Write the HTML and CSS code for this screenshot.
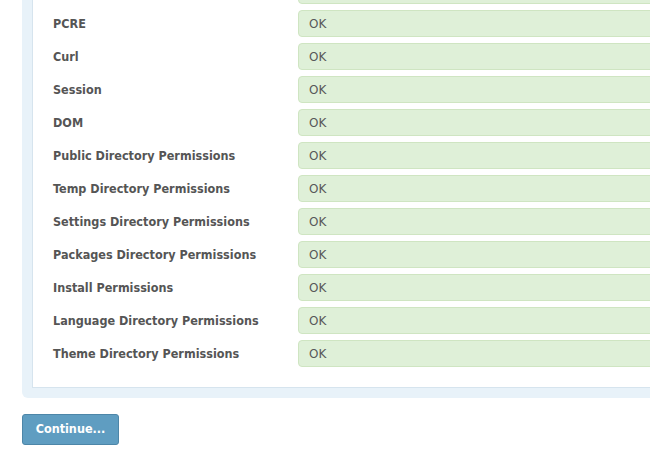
FILE: index.html
```html
<!DOCTYPE html>
<html>
<head>
<meta charset="utf-8">
<link rel="stylesheet" href="styles.css">
</head>
<body>
<div class="page">
  <div class="panel">
    <div class="inner">
      <div class="rows">
        <div class="label">Imagick</div><div class="status">OK</div>
        <div class="label">PCRE</div><div class="status">OK</div>
        <div class="label">Curl</div><div class="status">OK</div>
        <div class="label">Session</div><div class="status">OK</div>
        <div class="label">DOM</div><div class="status">OK</div>
        <div class="label">Public Directory Permissions</div><div class="status">OK</div>
        <div class="label">Temp Directory Permissions</div><div class="status">OK</div>
        <div class="label">Settings Directory Permissions</div><div class="status">OK</div>
        <div class="label">Packages Directory Permissions</div><div class="status">OK</div>
        <div class="label">Install Permissions</div><div class="status">OK</div>
        <div class="label">Language Directory Permissions</div><div class="status">OK</div>
        <div class="label">Theme Directory Permissions</div><div class="status">OK</div>
      </div>
    </div>
  </div>
  <button class="btn" type="button">Continue...</button>
</div>
</body>
</html>
```
FILE: styles.css
```css
html, body {
  margin: 0;
  padding: 0;
  background: #fff;
  overflow: hidden;
}
body {
  width: 650px;
  height: 452px;
  font-family: "DejaVu Sans", Verdana, sans-serif;
}
.page {
  padding-left: 22px;
  margin-top: -23px;
}
.panel {
  width: 900px;
  background: #e8f2f9;
  padding: 0 10px 10px 10px;
  border-radius: 0 0 6px 6px;
}
.inner {
  background: #fff;
  border: 1px solid #d6e4ee;
  border-top: none;
  padding: 0 0 20px 20px;
}
.rows {
  display: grid;
  grid-template-columns: 245px 1fr;
  row-gap: 6px;
  align-items: center;
}
.label {
  font-family: "DejaVu Sans Condensed", "DejaVu Sans", sans-serif;
  font-weight: bold;
  font-size: 12.5px;
  color: #555;
}
.status {
  height: 25px;
  line-height: 26px;
  background: #dff0d8;
  border: 1px solid #cfe5c2;
  border-radius: 4px;
  padding-left: 10px;
  font-size: 12px;
  color: #585858;
}
.btn {
  display: block;
  margin-top: 16px;
  width: 97px;
  height: 31px;
  background: #5f9dc1;
  border: 1px solid #4d86a8;
  border-radius: 3px;
  color: #fff;
  font-family: "DejaVu Sans Condensed", "DejaVu Sans", sans-serif;
  font-weight: bold;
  font-size: 12.5px;
  padding: 0 0 2px 0;
}
```
